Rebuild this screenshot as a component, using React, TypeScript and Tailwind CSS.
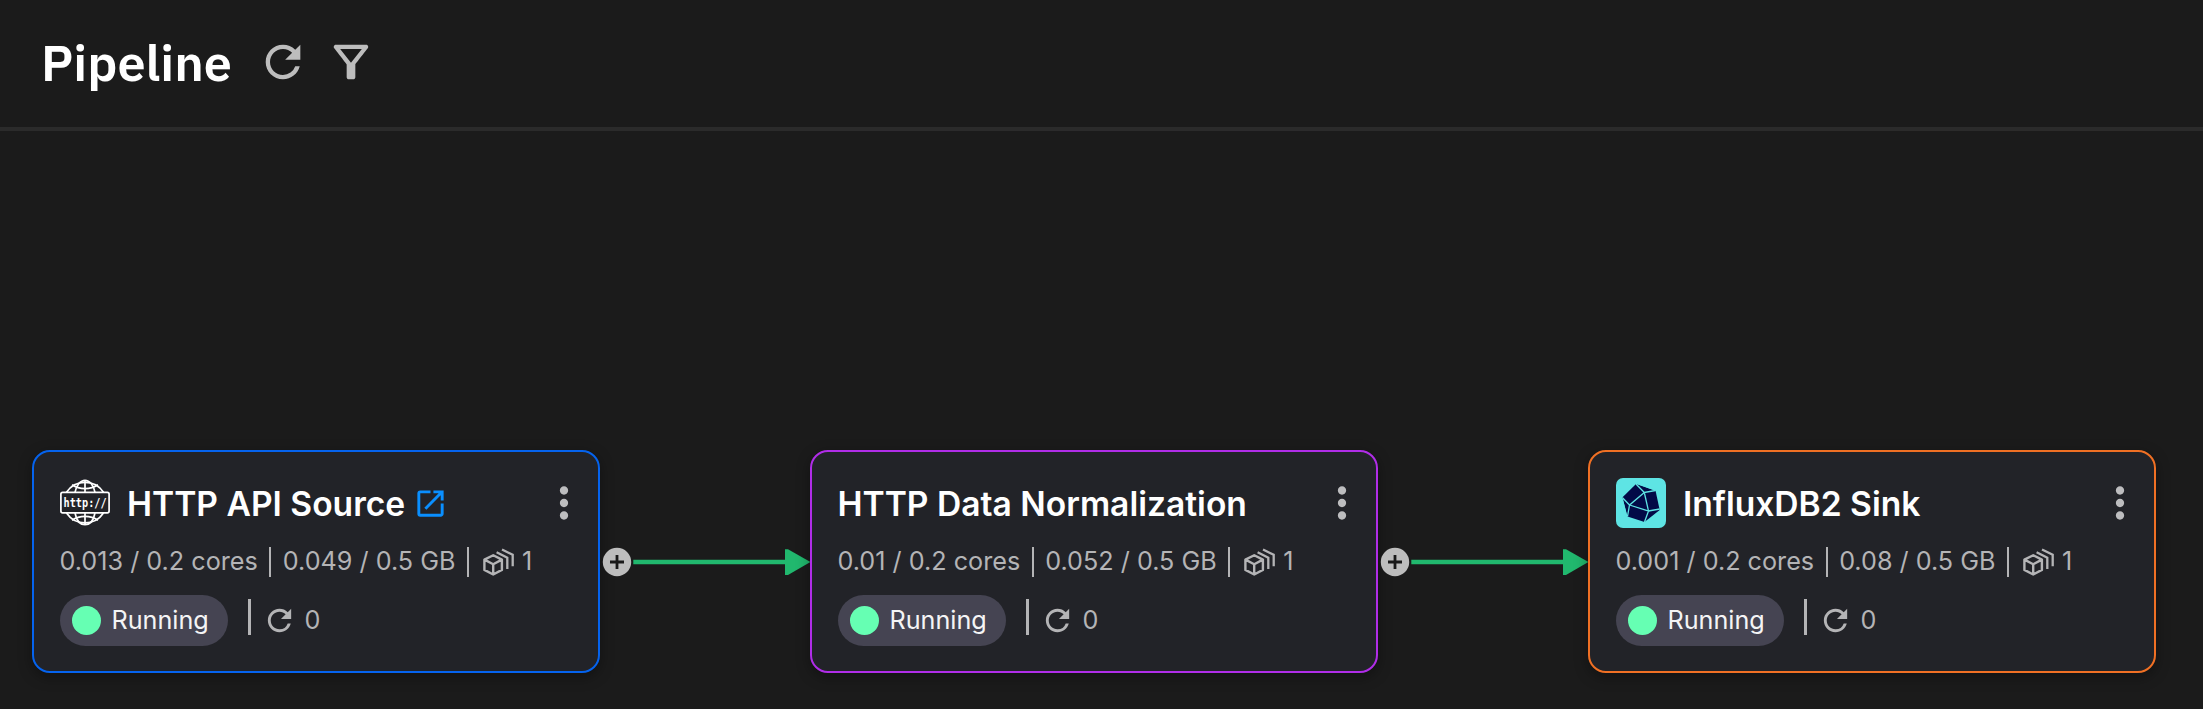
import React from "react";

const REFRESH =
  "M17.65 6.35A7.958 7.958 0 0 0 12 4c-4.42 0-7.99 3.58-7.99 8s3.57 8 7.99 8c3.73 0 6.84-2.55 7.73-6h-2.08A5.99 5.99 0 0 1 12 18c-3.31 0-6-2.69-6-6s2.69-6 6-6c1.66 0 3.14.69 4.22 1.78L13 11h7V4l-2.35 2.35z";
const FILTER =
  "M7 6h10l-5.01 6.3L7 6zm-2.75-.39C6.27 8.2 10 13 10 13v6c0 .55.45 1 1 1h2c.55 0 1-.45 1-1v-6s3.72-4.8 5.74-7.39c.51-.66.04-1.61-.79-1.61H5.04c-.83 0-1.3.95-.79 1.61z";
const OPEN =
  "M19 19H5V5h7V3H5a2 2 0 0 0-2 2v14a2 2 0 0 0 2 2h14c1.1 0 2-.9 2-2v-7h-2v7zM14 3v2h3.59l-9.83 9.83 1.41 1.41L19 6.41V10h2V3h-7z";
const MORE =
  "M12 8c1.1 0 2-.9 2-2s-.9-2-2-2-2 .9-2 2 .9 2 2 2zm0 2c-1.1 0-2 .9-2 2s.9 2 2 2 2-.9 2-2-.9-2-2-2zm0 6c-1.1 0-2 .9-2 2s.9 2 2 2 2-.9 2-2-.9-2-2-2z";

function Icon({ d, className }: { d: string; className: string }) {
  return (
    <svg viewBox="0 0 24 24" fill="currentColor" className={`shrink-0 ${className}`}>
      <path d={d} />
    </svg>
  );
}

function HttpGlobe() {
  return (
    <svg viewBox="0 0 50 50" className="h-[50px] w-[50px] shrink-0 overflow-visible" fill="none" stroke="#fff" strokeWidth="1.7">
      <path d="M6.500 14.300a22.300 22.300 0 0 1 37 0M6.500 35a22.300 22.300 0 0 0 37 0" />
      <path d="M25 2v12.300M25 35V47M15 14.300C16.500 7 20.500 2.300 25 2.300S33.500 7 35 14.300M15 35c1.500 7.500 5.500 11.700 10 11.700s8.500-4.200 10-11.700" />
      <path d="M12 6.800C19.500 11.800 30.500 11.800 38 6.800M12 42.200c7.500-5 18.500-5 26 0" />
      <rect x="0.900" y="14.300" width="48.200" height="20.500" rx="1.800" />
      <text
        transform="translate(3.600 28.500) scale(1 1.250)"
        fill="#fff"
        stroke="none"
        className="font-['DejaVu_Sans_Mono',monospace] text-[10.2px] font-bold"
      >
        http://
      </text>
    </svg>
  );
}

function InfluxLogo() {
  return (
    <svg viewBox="0 0 50 50" className="h-[50px] w-[50px] shrink-0">
      <rect width="50" height="50" rx="7" fill="#5ee4e4" />
      <path d="M20 6 39.500 12.500 43.700 32 28.500 44 11.500 38.500 6.300 19.500Z" fill="#020a47" />
      <path
        d="M20 6 28.300 14.500 39.500 12.500M22.500 6 40 12.500M28.300 14.500 13.500 27 6.300 19.500M13.500 27 11.500 38.500M6.300 21 10.500 38M13.500 27 32.500 33 28.300 14.500M32.500 33 43.700 31M32.500 33 28.500 44"
        fill="none"
        stroke="#5ee4e4"
        strokeWidth="1.3"
      />
    </svg>
  );
}

function Replicas() {
  return (
    <svg viewBox="0 0 31 28" className="h-[28px] w-[31px] shrink-0" fill="none" stroke="currentColor">
      <path
        d="M10.200 7.200 18.900 11.600V21.900L10.200 26.500 1.400 21.900V11.600ZM1.400 11.600 10.200 16.200 18.900 11.600M10.200 16.200V26.500"
        strokeWidth="2.4"
        strokeLinejoin="round"
      />
      <path d="M13.600 4.300 24.300 9.600V21M19 1.500 29.700 6.800V18.200" strokeWidth="2.3" />
    </svg>
  );
}

function Bar({ className }: { className: string }) {
  return <span className={`shrink-0 bg-[#b4b4b6] ${className}`} />;
}

type Node = {
  title: string;
  border: string;
  icon?: React.ReactNode;
  link?: boolean;
  cpu: string;
  memory: string;
};

const nodes: Node[] = [
  { title: "HTTP API Source", border: "border-[#0563ee]", icon: <HttpGlobe />, link: true, cpu: "0.013 / 0.2 cores", memory: "0.049 / 0.5 GB" },
  { title: "HTTP Data Normalization", border: "border-[#b02de8]", cpu: "0.01 / 0.2 cores", memory: "0.052 / 0.5 GB" },
  { title: "InfluxDB2 Sink", border: "border-[#f07024]", icon: <InfluxLogo />, cpu: "0.001 / 0.2 cores", memory: "0.08 / 0.5 GB" },
];

function Card({ node }: { node: Node }) {
  return (
    <article
      className={`flex h-[223px] w-[568px] shrink-0 flex-col rounded-[18px] border-2 bg-[#222328] pl-[25.5px] shadow-[0_4px_14px_rgba(0,0,0,0.35)] ${node.border}`}
    >
      <div className="mt-[25px] flex h-[52px] items-center pr-[9px]">
        {node.icon && <span className="mr-[17.5px] flex">{node.icon}</span>}
        <h2 className="whitespace-nowrap pt-px text-[33.6px] font-semibold leading-none text-white">{node.title}</h2>
        {node.link && <Icon d={OPEN} className="ml-[8px] h-[35px] w-[35px] text-[#0a8fff]" />}
        <Icon d={MORE} className="ml-auto h-[50px] w-[50px] text-[#bdbdbf]" />
      </div>
      <div className="mt-[15px] flex h-[36px] items-center whitespace-nowrap text-[25.2px] leading-none text-[#b4b4b6]">
        <span>{node.cpu}</span>
        <Bar className="mx-[11.5px] h-[30px] w-[2px]" />
        <span>{node.memory}</span>
        <Bar className="ml-[11.5px] mr-[14px] h-[30px] w-[2px]" />
        <Replicas />
        <span className="ml-[8px]">1</span>
      </div>
      <div className="mt-[15px] flex h-[51px] items-center text-[25.2px] leading-none">
        <div className="flex h-[51px] w-[168px] items-center rounded-full bg-[#454452] pl-[12px] text-[#f4f4f5]">
          <span className="mr-[11px] h-[29px] w-[29px] shrink-0 rounded-full bg-[#66ffb3]" />
          Running
        </div>
        <Bar className="mb-[8px] ml-[20px] h-[36px] w-[3px]" />
        <Icon d={REFRESH} className="ml-[11px] h-[35px] w-[35px] text-[#b4b4b6]" />
        <span className="ml-[8px] text-[#b4b4b6]">0</span>
      </div>
    </article>
  );
}

function Connector() {
  return (
    <div className="flex h-[223px] w-[210px] shrink-0 items-center">
      <svg viewBox="0 0 210 40" className="h-[40px] w-[210px]">
        <circle cx="17" cy="20" r="14.2" fill="#bdbdbd" />
        <path d="M10 20h14M17 13v14" stroke="#1a1a1a" strokeWidth="2.8" />
        <path d="M33.300 20H190" stroke="#21b86e" strokeWidth="4.4" />
        <path d="M185 7.200h3L210.500 20 188 33h-3Z" fill="#21b86e" />
      </svg>
    </div>
  );
}

export default function App() {
  return (
    <div className="flex h-[709px] w-[2203px] flex-col overflow-hidden bg-[#1b1b1b] font-['Inter',sans-serif]">
      <header className="flex h-[131px] shrink-0 items-center border-b-4 border-[#2b2b2b] pb-[3px] pl-[41px]">
        <h1 className="w-[190px] font-['IBM_Plex_Sans','Roboto',sans-serif] text-[50.4px] font-semibold leading-none text-white">
          Pipeline
        </h1>
        <Icon d={REFRESH} className="ml-[25.5px] h-[52px] w-[52px] text-[#bdbdbd]" />
        <Icon d={FILTER} className="ml-[16px] h-[52px] w-[52px] text-[#bdbdbd]" />
      </header>
      <main className="flex pl-[32px] pt-[319px]">
        <Card node={nodes[0]} />
        <Connector />
        <Card node={nodes[1]} />
        <Connector />
        <Card node={nodes[2]} />
      </main>
    </div>
  );
}
